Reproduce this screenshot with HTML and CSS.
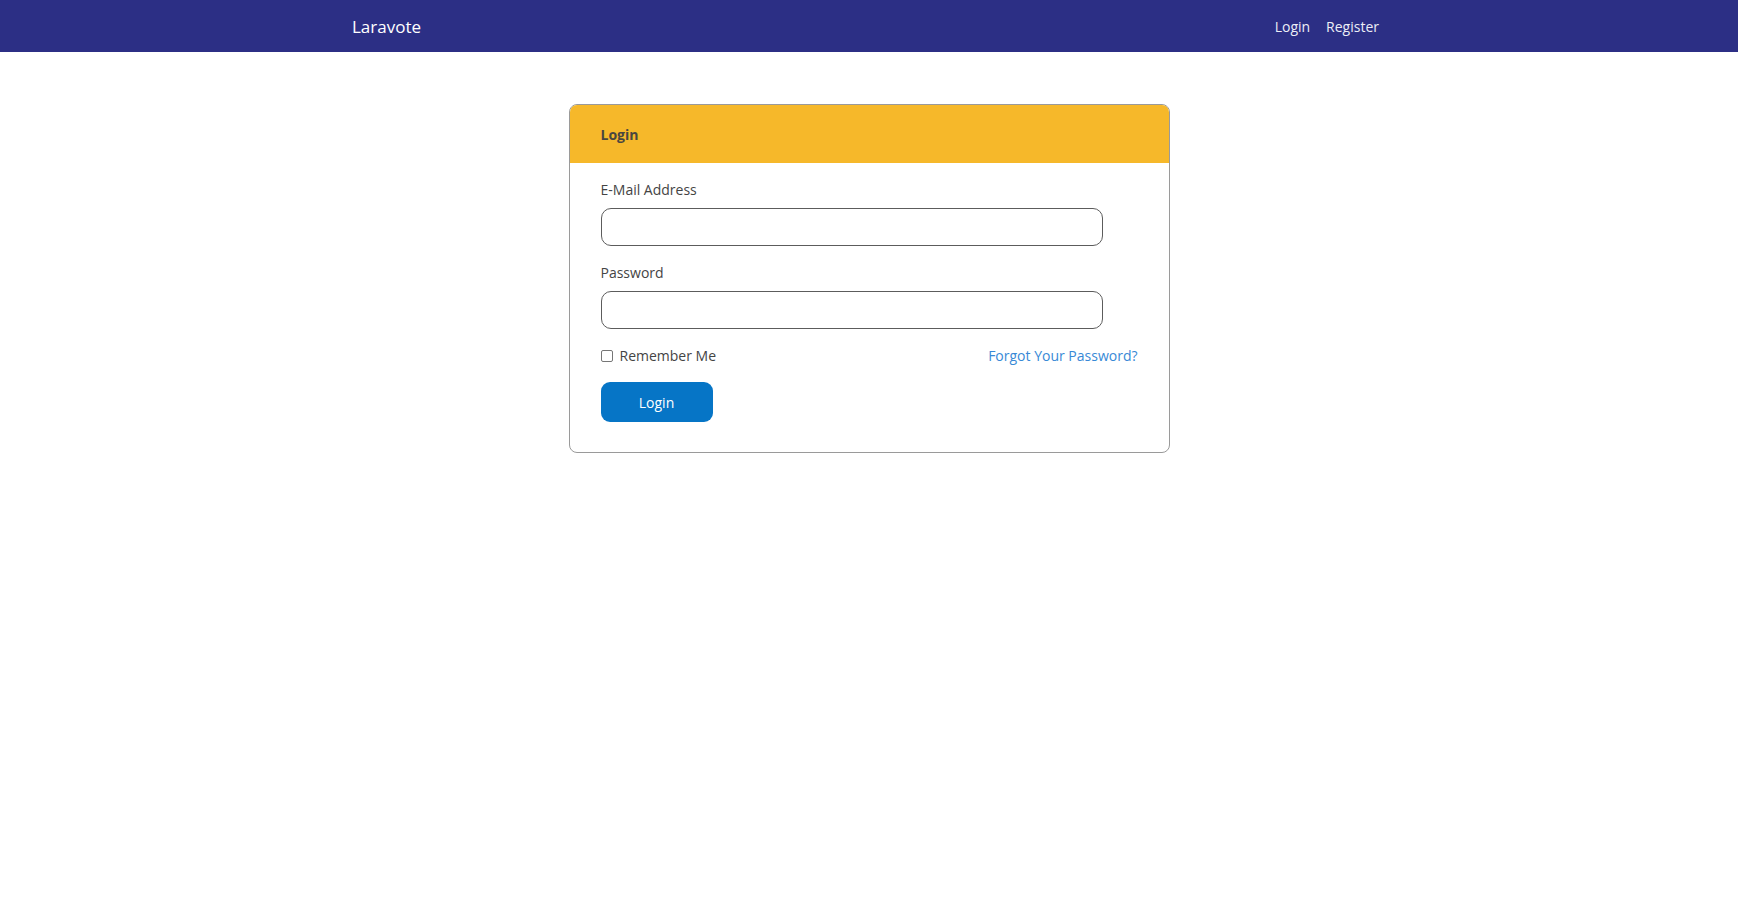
FILE: index.html
```html
<!DOCTYPE html>
<html lang="en">
<head>
<meta charset="utf-8">
<title>Laravote</title>
<link rel="stylesheet" href="styles.css">
</head>
<body>
<nav class="navbar">
  <div class="nav-inner">
    <a class="brand" href="#">Laravote</a>
    <div class="nav-links">
      <a class="nav-link" href="#">Login</a>
      <a class="nav-link" href="#">Register</a>
    </div>
  </div>
</nav>
<main class="main">
  <div class="card">
    <div class="card-header">Login</div>
    <form class="card-body">
      <div class="field">
        <label class="label" for="email">E-Mail Address</label>
        <input class="input" id="email" type="email">
      </div>
      <div class="field">
        <label class="label" for="password">Password</label>
        <input class="input" id="password" type="password">
      </div>
      <div class="row">
        <label class="check">
          <input class="checkbox" type="checkbox">
          <span>Remember Me</span>
        </label>
        <a class="forgot" href="#">Forgot Your Password?</a>
      </div>
      <div class="actions">
        <button class="btn" type="button">Login</button>
      </div>
    </form>
  </div>
</main>
</body>
</html>
```
FILE: styles.css
```css
* { box-sizing: border-box; }
html, body { margin: 0; padding: 0; }
body {
  font-family: "Open Sans", "Noto Sans", sans-serif;
  font-size: 14px;
  color: #444;
  background: #fff;
}
a { text-decoration: none; }

.navbar {
  height: 52px;
  background: #2c2f85;
}
.nav-inner {
  width: 1034px;
  height: 100%;
  margin: 0 auto;
  padding-right: 0;
  display: flex;
  align-items: center;
  justify-content: space-between;
}
.brand {
  color: #fff;
  font-size: 17px;
}
.nav-links { display: flex; margin-right: -1px; }
.nav-link {
  color: #eceef6;
  font-size: 14px;
  padding: 0 8px;
}

.main {
  padding-top: 52px;
  display: flex;
  justify-content: center;
}
.card {
  width: 601px;
  border: 1px solid #9a9a9a;
  border-radius: 8px;
  overflow: hidden;
}
.card-header {
  height: 58px;
  background: #f6b82a;
  display: flex;
  align-items: center;
  padding-left: 31px;
  font-weight: 700;
  color: #4a4640;
  font-size: 14px;
}
.card-body {
  padding: 16px 31px 30px 31px;
  display: flex;
  flex-direction: column;
}
.field { display: flex; flex-direction: column; margin-bottom: 16px; }
.label {
  line-height: 22px;
  margin-bottom: 7px;
}
.input {
  width: 502px;
  height: 38px;
  border: 1px solid #5c5c5c;
  border-radius: 10px;
  outline: none;
  font: inherit;
  padding: 0 12px;
}
.row {
  display: flex;
  justify-content: space-between;
  align-items: center;
  line-height: 22px;
}
.check { display: flex; align-items: center; gap: 7px; }
.checkbox {
  appearance: none;
  -webkit-appearance: none;
  margin: 0;
  width: 12px;
  height: 12px;
  border: 1px solid #767676;
  border-radius: 2px;
  background: #fff;
}
.forgot { color: #3889d6; }
.actions { margin-top: 15px; }
.btn {
  width: 112px;
  height: 40px;
  border: none;
  border-radius: 9px;
  background: #0675c6;
  color: #fff;
  font: inherit;
  font-size: 14px;
  cursor: pointer;
}
```
